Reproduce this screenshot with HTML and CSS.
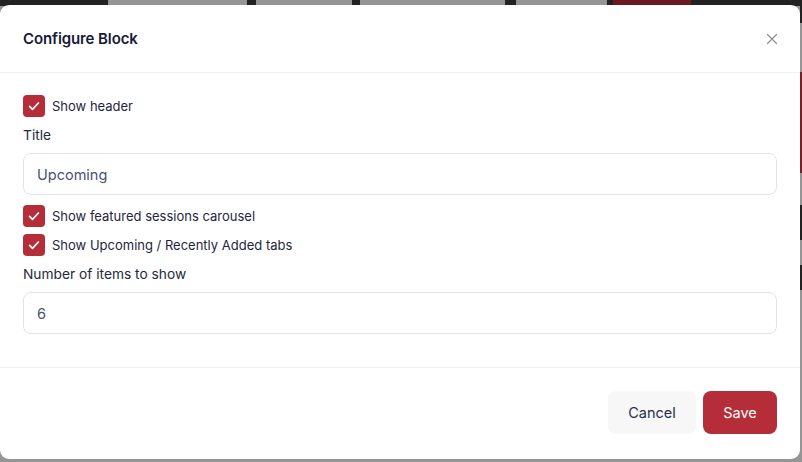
FILE: index.html
```html
<!DOCTYPE html>
<html lang="en">
<head>
<meta charset="utf-8">
<title>Configure Block</title>
<link rel="stylesheet" href="styles.css">
</head>
<body>
<div class="page">
  <div class="topbar">
    <span class="seg dark w108"></span>
    <span class="seg grey w139"></span>
    <span class="seg dark w9"></span>
    <span class="seg grey w96"></span>
    <span class="seg dark w8"></span>
    <span class="seg grey w145"></span>
    <span class="seg dark w11"></span>
    <span class="seg grey w91"></span>
    <span class="seg dark w6"></span>
    <span class="seg red w78"></span>
    <span class="seg dark grow"></span>
  </div>
  <div class="sidebar">
    <span class="vseg dark h23"></span>
    <span class="vseg grey h49"></span>
    <span class="vseg red h101"></span>
    <span class="vseg grey h32"></span>
    <span class="vseg dark h35"></span>
    <span class="vseg grey h25"></span>
    <span class="vseg dark h25"></span>
    <span class="vseg grey vgrow"></span>
  </div>
</div>

<div class="modal" role="dialog" aria-labelledby="modal-title">
  <header class="modal-header">
    <h2 id="modal-title" class="modal-title">Configure Block</h2>
    <button class="close-btn" aria-label="Close">
      <svg width="12" height="12" viewBox="0 0 12 12" fill="none" stroke="#8a8d96" stroke-width="1.2" stroke-linecap="round"><path d="M1.5 1.5l9 9M10.5 1.5l-9 9"/></svg>
    </button>
  </header>

  <div class="modal-body">
    <label class="check-row">
      <span class="checkbox"><svg width="14" height="14" viewBox="0 0 14 14" fill="none" stroke="#fff" stroke-width="1.7" stroke-linecap="round" stroke-linejoin="round"><path d="M2.6 7.4l2.9 2.9 5.9-6.3"/></svg></span>
      <span class="check-text">Show header</span>
    </label>

    <div class="field">
      <div class="field-label">Title</div>
      <div class="input">Upcoming</div>
    </div>

    <label class="check-row after-input">
      <span class="checkbox"><svg width="14" height="14" viewBox="0 0 14 14" fill="none" stroke="#fff" stroke-width="1.7" stroke-linecap="round" stroke-linejoin="round"><path d="M2.6 7.4l2.9 2.9 5.9-6.3"/></svg></span>
      <span class="check-text">Show featured sessions carousel</span>
    </label>
    <label class="check-row tight">
      <span class="checkbox"><svg width="14" height="14" viewBox="0 0 14 14" fill="none" stroke="#fff" stroke-width="1.7" stroke-linecap="round" stroke-linejoin="round"><path d="M2.6 7.4l2.9 2.9 5.9-6.3"/></svg></span>
      <span class="check-text">Show Upcoming / Recently Added tabs</span>
    </label>

    <div class="field">
      <div class="field-label">Number of items to show</div>
      <div class="input">6</div>
    </div>
  </div>

  <footer class="modal-footer">
    <button class="btn btn-cancel">Cancel</button>
    <button class="btn btn-save">Save</button>
  </footer>
</div>
</body>
</html>
```

FILE: styles.css
```css
* { box-sizing: border-box; }

html, body {
  margin: 0;
  padding: 0;
  width: 802px;
  height: 462px;
  overflow: hidden;
}

body {
  background: #959595;
  font-family: Inter, "Noto Sans", "Liberation Sans", sans-serif;
  color: #1c2238;
}

.page {
  position: relative;
  width: 802px;
  height: 462px;
}

.topbar {
  display: flex;
  height: 6px;
}
.seg { display: block; height: 100%; }
.dark { background: #222222; }
.grey { background: #959595; }
.red { background: #6b1a21; }
.w108 { width: 108px; }
.w139 { width: 139px; }
.w9 { width: 9px; }
.w96 { width: 96px; }
.w8 { width: 8px; }
.w145 { width: 145px; }
.w11 { width: 11px; }
.w91 { width: 91px; }
.w6 { width: 6px; }
.w78 { width: 78px; }
.grow { flex: 1; }

.sidebar {
  position: absolute;
  top: 0;
  right: 0;
  width: 2px;
  height: 462px;
  display: flex;
  flex-direction: column;
}
.vseg { display: block; width: 100%; }
.vseg.red { background: #7a1f28; }
.h23 { height: 23px; }
.h49 { height: 49px; }
.h101 { height: 101px; }
.h32 { height: 32px; }
.h35 { height: 35px; }
.h25 { height: 25px; }
.vgrow { flex: 1; }

.modal {
  position: absolute;
  left: 0;
  top: 5px;
  width: 800px;
  height: 454px;
  background: #ffffff;
  border-radius: 9px;
  display: flex;
  flex-direction: column;
  overflow: hidden;
}

.modal-header {
  height: 68px;
  display: flex;
  align-items: center;
  justify-content: space-between;
  padding: 0 22px 0 23px;
  border-bottom: 1px solid #f1f1f3;
}

.modal-title {
  margin: 0;
  font-size: 15px;
  font-weight: 600;
  color: #151b38;
  letter-spacing: -0.1px;
}

.close-btn {
  border: 0;
  background: none;
  padding: 0;
  width: 12px;
  height: 12px;
  display: flex;
  align-items: center;
  justify-content: center;
  cursor: pointer;
}

.modal-body {
  flex: 1;
  padding: 22px 23px 0 23px;
  border-bottom: 1px solid #f1f1f3;
  display: flex;
  flex-direction: column;
}

.check-row {
  display: flex;
  align-items: center;
  gap: 7px;
  height: 22px;
}
.check-row.after-input { margin-top: 10px; }
.check-row.tight { margin-top: 7px; }

.checkbox {
  width: 22px;
  height: 22px;
  border-radius: 4px;
  background: #b42d38;
  display: flex;
  align-items: center;
  justify-content: center;
  flex: none;
}

.check-text {
  font-size: 13px;
  color: #1e2540;
}

.field {
  margin-top: 8px;
  display: flex;
  flex-direction: column;
}

.field-label {
  font-size: 13.75px;
  line-height: 20px;
  font-weight: 400;
  color: #232940;
  margin-bottom: 8px;
}

.input {
  height: 42px;
  border: 1px solid #e1e3ea;
  border-radius: 8px;
  padding: 0 13px;
  display: flex;
  align-items: center;
  font-size: 14.5px;
  color: #4a5270;
}

.modal-footer {
  height: 91px;
  display: flex;
  justify-content: flex-end;
  align-items: flex-start;
  gap: 7px;
  padding: 23px 23px 0 0;
}

.btn {
  height: 43px;
  border: 0;
  border-radius: 8px;
  font-family: inherit;
  font-size: 14.5px;
  font-weight: 400;
  cursor: pointer;
}

.btn-cancel {
  width: 88px;
  background: #f7f7f8;
  color: #27304d;
}

.btn-save {
  width: 74px;
  background: #b42d38;
  color: #ffffff;
}
```
